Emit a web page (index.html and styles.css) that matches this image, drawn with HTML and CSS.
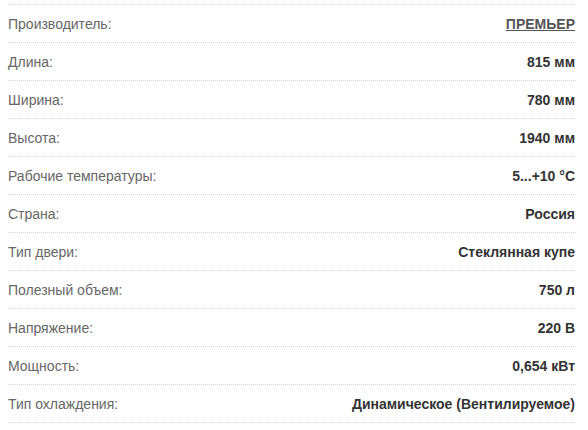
FILE: index.html
```html
<!DOCTYPE html>
<html lang="ru">
<head>
<meta charset="utf-8">
<link rel="stylesheet" href="styles.css">
</head>
<body>
<div class="specs">
  <div class="row"><span class="label">Производитель:</span><a class="value link" href="#">ПРЕМЬЕР</a></div>
  <div class="row"><span class="label">Длина:</span><span class="value">815 мм</span></div>
  <div class="row"><span class="label">Ширина:</span><span class="value">780 мм</span></div>
  <div class="row"><span class="label">Высота:</span><span class="value">1940 мм</span></div>
  <div class="row"><span class="label">Рабочие температуры:</span><span class="value">5...+10 °C</span></div>
  <div class="row"><span class="label">Страна:</span><span class="value">Россия</span></div>
  <div class="row"><span class="label">Тип двери:</span><span class="value">Стеклянная купе</span></div>
  <div class="row"><span class="label">Полезный объем:</span><span class="value">750 л</span></div>
  <div class="row"><span class="label">Напряжение:</span><span class="value">220 В</span></div>
  <div class="row"><span class="label">Мощность:</span><span class="value">0,654 кВт</span></div>
  <div class="row"><span class="label">Тип охлаждения:</span><span class="value">Динамическое (Вентилируемое)</span></div>
</div>
</body>
</html>
```
FILE: styles.css
```css
html, body {
  margin: 0;
  padding: 0;
  background: #fff;
}
body {
  padding: 4px 12px 0 8px;
  font-family: "Liberation Sans", Arial, sans-serif;
  font-size: 14px;
}
.specs {
  border-bottom: 1px dotted #d8d8d8;
}
.row {
  display: flex;
  justify-content: space-between;
  align-items: center;
  height: 37px;
  border-top: 1px dotted #d8d8d8;
}
.label {
  color: #666;
}
.value {
  color: #333;
  font-weight: bold;
  padding-right: 1px;
}
.link {
  color: #555;
  text-decoration: underline;
}
```
